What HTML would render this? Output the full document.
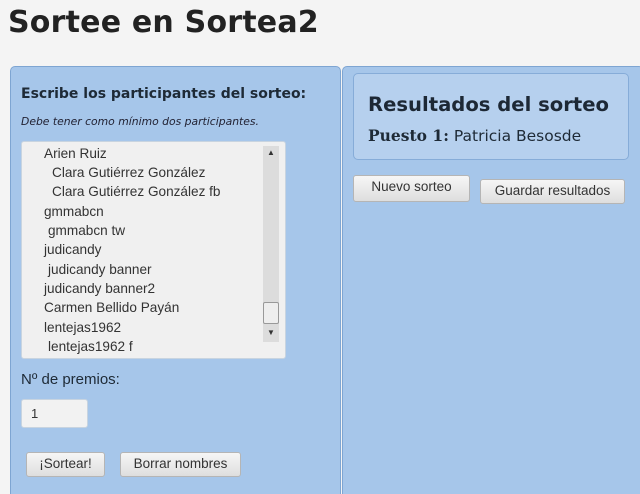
<!DOCTYPE html>
<html><head><meta charset="utf-8"><style>
html,body{margin:0;width:640px;height:494px;overflow:hidden}
body{background:#f4f4f4;font-family:"DejaVu Sans",sans-serif;position:relative;color:#1e2a36}
h1{position:absolute;left:8px;top:1px;margin:0;font-size:30px;font-weight:bold;line-height:44px;color:#222;letter-spacing:0.2px}
.panel{position:absolute;background:#a6c6ea;border:1px solid #7ea5d2;border-radius:5px}
.lt{font-size:14px;font-weight:bold;position:absolute;left:10px;top:19px}
.it{font-size:10.8px;font-style:italic;position:absolute;left:10px;top:48px;color:#223}
.ta{position:absolute;left:10px;top:74px;width:263px;height:216px;background:#f0f0f0;border:1px solid #c8d4e0;border-radius:3px;font-family:"Liberation Sans",sans-serif;font-size:13.6px;color:#333;overflow:hidden}
.ta div{position:absolute;white-space:pre}
.sb{position:absolute;left:241px;top:4px;width:16px;height:196px;background:#dcdcdc}
.btn{position:absolute;height:23px;border:1px solid #b5b5b5;border-radius:3px;background:linear-gradient(#f6f6f6,#dedede);font-family:"Liberation Sans",sans-serif;font-size:13.5px;color:#333;text-align:center;line-height:22px}
</style></head><body>
<h1>Sortee en Sortea2</h1>
<div class="panel" style="left:10px;top:66px;width:329px;height:440px">
<div class="lt">Escribe los participantes del sorteo:</div>
<div class="it">Debe tener como mínimo dos participantes.</div>
<div class="ta">
<div style="left:22px;top:4px">Arien Ruiz</div>
<div style="left:30px;top:23px">Clara Gutiérrez González</div>
<div style="left:30px;top:42px">Clara Gutiérrez González fb</div>
<div style="left:22px;top:62px">gmmabcn</div>
<div style="left:26px;top:81px">gmmabcn tw</div>
<div style="left:22px;top:100px">judicandy</div>
<div style="left:26px;top:120px">judicandy banner</div>
<div style="left:22px;top:139px">judicandy banner2</div>
<div style="left:22px;top:158px">Carmen Bellido Payán</div>
<div style="left:22px;top:178px">lentejas1962</div>
<div style="left:26px;top:197px">lentejas1962 f</div>
<div class="sb"><div style="position:absolute;left:0;top:156px;width:14px;height:20px;background:#eee;border:1px solid #999;border-radius:2px"></div><div style="position:absolute;left:4px;top:2px;font-size:8px">▲</div><div style="position:absolute;left:4px;top:182px;font-size:8px">▼</div></div>
</div>
<div style="position:absolute;left:10px;top:304px;font-size:15px;font-family:'Liberation Sans',sans-serif">Nº de premios:</div>
<div style="position:absolute;left:10px;top:332px;width:65px;height:27px;background:#f2f2f2;border:1px solid #c8d4e0;border-radius:3px;font-family:'Liberation Sans',sans-serif;font-size:13px;line-height:27px;text-indent:9px;color:#333">1</div>
<div class="btn" style="left:15px;top:385px;width:77px">¡Sortear!</div>
<div class="btn" style="left:109px;top:385px;width:119px">Borrar nombres</div>
</div>
<div class="panel" style="left:342px;top:66px;width:300px;height:440px">
<div style="position:absolute;left:10px;top:6px;width:274px;height:85px;background:#b6d0ee;border:1px solid #86acd8;border-radius:5px">
<div style="position:absolute;left:14px;top:19px;font-size:19.6px;font-weight:bold;color:#1d2835">Resultados del sorteo</div>
<div style="position:absolute;left:14px;top:52px;font-size:15.5px"><b style="font-family:'DejaVu Serif',serif">Puesto 1:</b> Patricia Besosde</div>
</div>
<div class="btn" style="left:10px;top:108px;width:115px;height:25px">Nuevo sorteo</div>
<div class="btn" style="left:137px;top:112px;width:143px">Guardar resultados</div>
</div>
</body></html>
